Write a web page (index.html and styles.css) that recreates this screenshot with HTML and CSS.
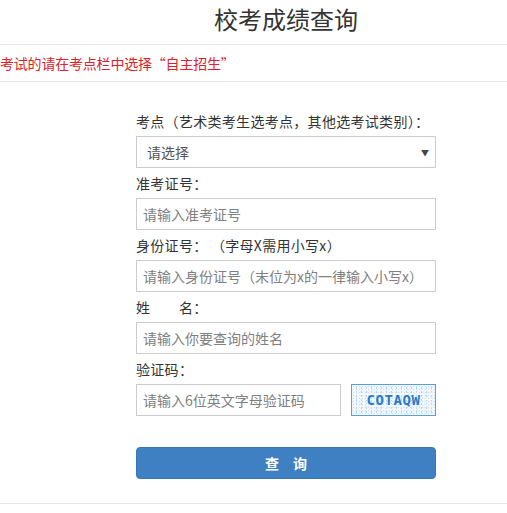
FILE: index.html
```html
<!DOCTYPE html>
<html lang="zh-CN">
<head>
<meta charset="utf-8">
<title>校考成绩查询</title>
<link rel="stylesheet" href="styles.css">
</head>
<body>
<header class="head">
  <h1 class="title">校考成绩查询</h1>
</header>
<div class="notice"><span class="notice-text">考试的请在考点栏中选择“自主招生”</span></div>
<form class="form">
  <div class="field">
    <label class="label">考点（艺术类考生选考点，其他选考试类别）：</label>
    <div class="select">
      <span class="select-text">请选择</span>
      <span class="arrow">▼</span>
    </div>
  </div>
  <div class="field">
    <label class="label">准考证号：</label>
    <input class="input" type="text" placeholder="请输入准考证号">
  </div>
  <div class="field">
    <label class="label">身份证号： （字母X需用小写x）</label>
    <input class="input" type="text" placeholder="请输入身份证号（末位为x的一律输入小写x）">
  </div>
  <div class="field">
    <label class="label">姓　　名：</label>
    <input class="input" type="text" placeholder="请输入你要查询的姓名">
  </div>
  <div class="field">
    <label class="label">验证码：</label>
    <div class="code-row">
      <input class="input code-input" type="text" placeholder="请输入6位英文字母验证码">
      <div class="captcha">COTAQW</div>
    </div>
  </div>
  <button class="btn" type="button">查&emsp;询</button>
</form>
</body>
</html>
```
FILE: styles.css
```css
html, body {
  margin: 0;
  padding: 0;
  background: #fff;
  overflow: hidden;
}
body {
  font-family: "Noto Sans CJK SC", "Microsoft YaHei", sans-serif;
  font-size: 14px;
  color: #333;
}
.head {
  height: 44px;
  border-bottom: 1px solid #e6e6e6;
}
.title {
  margin: 0 0 0 136px;
  width: 300px;
  text-align: center;
  font-size: 24px;
  font-weight: normal;
  line-height: 37px;
  color: #333;
}
.notice {
  height: 36px;
  line-height: 36px;
  border-bottom: 1px solid #e6e6e6;
  white-space: nowrap;
  overflow: hidden;
}
.notice-text {
  display: inline-block;
  margin-left: 0;
  letter-spacing: -0.2px;
  color: #e0202a;
  font-size: 14px;
}
.form {
  width: 300px;
  margin: 0 0 0 136px;
  padding-top: 29px;
  padding-bottom: 24px;
}
.field {
  display: flex;
  flex-direction: column;
  margin-bottom: 5px;
}
.label {
  display: block;
  height: 20px;
  line-height: 20px;
  margin-bottom: 5px;
  color: #333;
  letter-spacing: 0.3px;
  white-space: nowrap;
}
.select {
  box-sizing: border-box;
  height: 32px;
  border: 1px solid #ccc;
  display: flex;
  align-items: center;
  justify-content: space-between;
  padding: 0 6px 0 10px;
}
.select-text {
  color: #555;
  font-size: 14px;
}
.arrow {
  font-size: 8px;
  color: #444;
}
.input {
  box-sizing: border-box;
  width: 100%;
  height: 32px;
  border: 1px solid #ccc;
  padding: 0 6px;
  margin: 0;
  font-family: inherit;
  font-size: 14px;
  color: #333;
  outline: none;
  background: #fff;
}
.input::placeholder {
  color: #808080;
}
.code-row {
  display: flex;
  justify-content: space-between;
  align-items: center;
}
.code-input {
  width: 205px;
}
.captcha {
  box-sizing: border-box;
  width: 85px;
  height: 32px;
  border: 1px solid #5c9fd6;
  display: flex;
  align-items: center;
  justify-content: center;
  font-family: "DejaVu Sans Mono", "Liberation Mono", monospace;
  font-weight: bold;
  font-size: 14px;
  letter-spacing: 0.6px;
  color: #2b7bc4;
  background-color: #eef5fb;
  background-image:
    radial-gradient(circle, #c9dff2 0.7px, transparent 1px),
    radial-gradient(circle, #ffffff 0.7px, transparent 1px),
    radial-gradient(circle, #b9d5ee 0.6px, transparent 1px);
  background-size: 3px 3px, 4px 5px, 5px 4px;
  background-position: 0 0, 1px 2px, 2px 1px;
}
.btn {
  display: block;
  box-sizing: border-box;
  width: 300px;
  height: 32px;
  margin-top: 31px;
  border: 1px solid #3877b5;
  border-radius: 4px;
  background: #3e80c2;
  color: #fff;
  font-family: inherit;
  font-size: 14px;
  font-weight: bold;
  cursor: pointer;
  padding: 0;
}
body::after {
  content: "";
  display: block;
  border-top: 1px solid #e6e6e6;
}
```
